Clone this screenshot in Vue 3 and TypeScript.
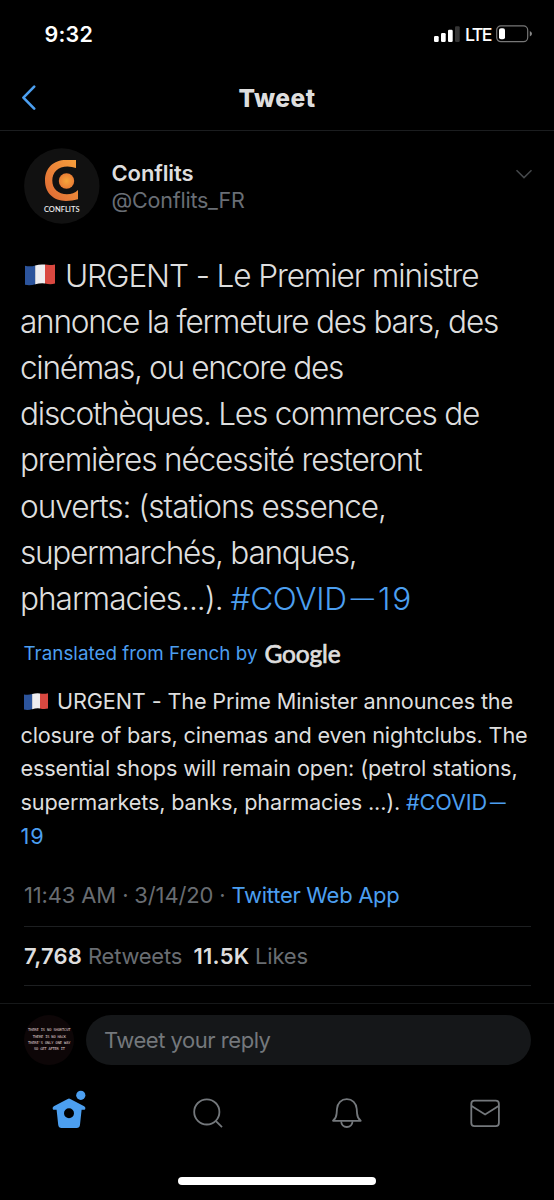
<script setup lang="ts">
import { h, type FunctionalComponent, type ObjectDirective } from 'vue'

interface Run {
  text: string
  width: number
  link?: boolean
  dash?: boolean
}
interface Line {
  flag?: boolean
  runs: Run[]
}

// Tracks a run of text evenly so that it fills the given measure.
const vFit: ObjectDirective<HTMLElement, number> = {
  mounted(el, { value }) {
    const count = (el.textContent ?? '').length
    const natural = el.getBoundingClientRect().width
    if (count > 0) el.style.letterSpacing = `${(value - natural) / count}px`
  },
}

const original: Line[] = [
  { flag: true, runs: [{ text: 'URGENT - Le Premier ministre', width: 413.5 }] },
  { runs: [{ text: 'annonce la fermeture des bars, des', width: 478 }] },
  { runs: [{ text: 'cinémas, ou encore des', width: 323 }] },
  { runs: [{ text: 'discothèques. Les commerces de', width: 459 }] },
  { runs: [{ text: 'premières nécessité resteront', width: 401.5 }] },
  { runs: [{ text: 'ouverts: (stations essence,', width: 366 }] },
  { runs: [{ text: 'supermarchés, banques,', width: 336.5 }] },
  {
    runs: [
      { text: 'pharmacies...). ', width: 210.5 },
      { text: '#COVID', width: 116, link: true },
      { text: '－', width: 31.5, link: true, dash: true },
      { text: '19', width: 35, link: true },
    ],
  },
]

const translated: Line[] = [
  { flag: true, runs: [{ text: 'URGENT - The Prime Minister announces the', width: 456 }] },
  { runs: [{ text: 'closure of bars, cinemas and even nightclubs. The', width: 507 }] },
  { runs: [{ text: 'essential shops will remain open: (petrol stations,', width: 497 }] },
  {
    runs: [
      { text: 'supermarkets, banks, pharmacies ...). ', width: 385.5 },
      { text: '#COVID', width: 81, link: true },
      { text: '－', width: 22, link: true, dash: true },
    ],
  },
  { runs: [{ text: '19', width: 24, link: true }] },
]

const Flag: FunctionalComponent = () =>
  h('svg', { viewBox: '0 0 30 22', preserveAspectRatio: 'none' }, [
    h('path', { d: 'M0 1.8Q5 3 10.5 1.4V20.2Q5 22 0 20.8Z', fill: '#2c549c' }),
    h('path', { d: 'M10.2 1.4Q15 0 20 .6V19.4Q15 18.9 10.2 20.3Z', fill: '#eeedf0' }),
    h('path', { d: 'M20 .6Q25 1.6 30 .4V19.6Q25 20.8 20 19.4Z', fill: '#d94840' }),
  ])
</script>

<template>
  <main class="screen">
    <div class="status">
      <span v-fit="48.5" class="time">9:32</span>
      <div class="signals">
        <svg class="bars" width="26" height="16" viewBox="0 0 26 16">
          <rect x="0" y="10" width="4.7" height="6" rx="1.2" fill="#fff" />
          <rect x="7" y="7" width="4.7" height="9" rx="1.2" fill="#fff" />
          <rect x="14" y="3.7" width="4.7" height="12.3" rx="1.2" fill="#fff" />
          <rect x="21" y="0.3" width="4.7" height="15.7" rx="1.2" fill="#353535" />
        </svg>
        <span class="lte"><span v-fit="26">LTE</span></span>
        <svg class="battery" width="37" height="18" viewBox="0 0 37 18">
          <rect x="0.7" y="0.9" width="31" height="15.8" rx="4.2" fill="none" stroke="#777" stroke-width="1.2" />
          <rect x="3" y="3.3" width="6" height="11" rx="2" fill="#fff" />
          <path d="M33.8 6Q36 7 36 8.8T33.8 11.6Z" fill="#888" />
        </svg>
      </div>
    </div>

    <header class="bar">
      <svg class="back" width="16" height="26" viewBox="0 0 16 26">
        <path d="M13.2 1.6 2.4 12.6 13.2 23.6" fill="none" stroke="#4c9ff0" stroke-width="2.6" stroke-linecap="round" stroke-linejoin="round" />
      </svg>
      <h1><span v-fit="77">Tweet</span></h1>
    </header>

    <section class="author">
      <svg class="avatar" width="76" height="76" viewBox="0 0 76 76">
        <defs>
          <linearGradient id="ring" x1="0" y1="1" x2="1" y2="0">
            <stop offset="0" stop-color="#dd6734" />
            <stop offset="1" stop-color="#f8a03c" />
          </linearGradient>
          <radialGradient id="core">
            <stop offset="0" stop-color="#f7a63b" />
            <stop offset="1" stop-color="#ea7d34" />
          </radialGradient>
        </defs>
        <circle cx="37.8" cy="38" r="37.7" fill="#111" />
        <path d="M52 12V20Q48 18.4 43.5 18.4C34 18.4 28.3 24.2 28.3 32.6S34.2 46.3 43 46.3Q49.5 46.3 54 42V51.3Q48.5 53 42 53C29.5 53 21 45 21 32.6C21 20 29.5 12 42 12Z" fill="url(#ring)" />
        <circle cx="42.5" cy="33" r="7.7" fill="url(#core)" />
        <text x="20" y="63.7" textLength="35.5" lengthAdjust="spacingAndGlyphs" class="brand">CONFLITS</text>
      </svg>
      <div class="names">
        <strong><span v-fit="82">Conflits</span></strong>
        <span><span v-fit="133">@Conflits_FR</span></span>
      </div>
      <svg class="caret" width="18" height="10" viewBox="0 0 18 10">
        <path d="M1.5 1.2 9 8.6 16.5 1.2" fill="none" stroke="#45484b" stroke-width="1.5" />
      </svg>
    </section>

    <p class="copy large">
      <span v-for="(line, i) in original" :key="i" class="line">
        <Flag v-if="line.flag" class="flag" />
        <span v-for="(run, j) in line.runs" :key="j" v-fit="run.width" :class="{ link: run.link, dash: run.dash }">{{ run.text }}</span>
      </span>
    </p>

    <div class="credit">
      <span v-fit="234">Translated from French by</span>
      <b v-fit="76">Google</b>
    </div>

    <p class="copy small">
      <span v-for="(line, i) in translated" :key="i" class="line">
        <Flag v-if="line.flag" class="flag" />
        <span v-for="(run, j) in line.runs" :key="j" v-fit="run.width" :class="{ link: run.link, dash: run.dash }">{{ run.text }}</span>
      </span>
    </p>

    <div class="meta">
      <span v-fit="207.5">11:43 AM · 3/14/20 · </span>
      <span v-fit="168" class="link">Twitter Web App</span>
    </div>

    <div class="stats">
      <b v-fit="58">7,768</b>
      <span v-fit="94" class="retweets">Retweets</span>
      <b v-fit="56" class="likes-count">11.5K</b>
      <span v-fit="53" class="likes">Likes</span>
    </div>

    <section class="reply">
      <svg width="50" height="50" viewBox="0 0 50 50">
        <circle cx="25" cy="25" r="25" fill="#0d0607" />
        <g class="motto">
          <text x="4" y="16.4" textLength="42.5">THERE IS NO SHORTCUT</text>
          <text x="8.7" y="22.7" textLength="33.3">THERE IS NO HACK</text>
          <text x="4" y="29" textLength="42.5">THERE'S ONLY ONE WAY</text>
          <text x="10" y="35.3" textLength="31">SO GET AFTER IT</text>
        </g>
      </svg>
      <div class="field"><span v-fit="166.5">Tweet your reply</span></div>
    </section>

    <nav class="tabs">
      <svg width="44" height="44" viewBox="0 0 44 44">
        <path fill="#4c9ff0" fill-rule="evenodd" d="M20.7 12.9Q22 12.2 23.3 12.9L37.2 20.3Q38.8 21.3 38.3 22.9Q37.7 24.1 35.7 23.8H34.6L33 38.7Q32.6 42 29.6 42H14.6Q11.6 42 11.2 38.7L9.6 23.8H8.3Q6.2 24.1 5.7 22.9Q5.2 21.3 6.8 20.3ZM22 22.2A5 5 0 1 0 22 32.2A5 5 0 1 0 22 22.2Z" />
        <circle cx="33.8" cy="9.3" r="4.6" fill="#4c9ff0" />
      </svg>
      <svg width="44" height="44" viewBox="0 0 44 44" class="outline">
        <circle cx="20.8" cy="25.9" r="12.6" />
        <path d="M29.7 34.8 36 41.1" />
      </svg>
      <svg width="44" height="44" viewBox="0 0 44 44" class="outline">
        <path d="M9 34.8H36.7Q33.4 32.2 33.1 27.6L32.7 22.8C32.3 17 28.3 13.1 22.8 13.1S13.4 17 13 22.8L12.6 27.6Q12.3 32.2 9 34.8Z" stroke-linejoin="round" />
        <path d="M17.2 35.3C17.2 38.5 19.5 41 22.8 41S28.5 38.5 28.5 35.3" />
      </svg>
      <svg width="44" height="44" viewBox="0 0 44 44" class="outline">
        <rect x="8.3" y="14.7" width="27.6" height="25.4" rx="3.2" />
        <path d="M8.6 20 22.1 28.4 35.6 20" />
      </svg>
    </nav>
    <div class="grip"></div>
  </main>
</template>

<style>
html,
body {
  background: #000;
}
</style>

<style scoped>
.screen {
  width: 554px;
  height: 1200px;
  overflow: hidden;
  background: #000;
  color: #dedede;
  font-family: Inter, "Liberation Sans", sans-serif;
  font-size: 22px;
  display: flex;
  flex-direction: column;
}
.screen > * {
  flex: none;
  box-sizing: border-box;
}
span,
b,
strong {
  white-space: pre;
}
svg {
  display: block;
  flex: none;
}
.link {
  color: #4c9ff0;
}

.status {
  height: 68.6px;
  padding: 0 21px 0 44.5px;
  display: flex;
  align-items: center;
  justify-content: space-between;
  color: #fff;
}
.time {
  font-size: 21.5px;
  font-weight: 600;
}
.signals {
  display: flex;
  align-items: center;
  font-size: 17.8px;
  font-weight: 500;
}
.lte {
  margin: 1px 5px 0 5px;
}

.bar {
  height: 62px;
  padding: 0 21px 3px;
  display: grid;
  grid-template-columns: 16px 1fr 16px;
  align-items: center;
  border-bottom: 1px solid #1b1d1f;
}
h1 {
  margin: 0;
  text-align: center;
  font-size: 24.5px;
  font-weight: 800;
}

.author {
  height: 122px;
  padding: 17.4px 21px 0 24px;
  display: flex;
  align-items: flex-start;
}
.brand {
  font: 600 6.7px Lato, sans-serif;
  fill: #eee;
}
.names {
  flex: 1;
  padding: 12.3px 0 0 11.5px;
  display: flex;
  flex-direction: column;
  line-height: 27px;
}
.names strong {
  font-weight: 600;
}
.names > span {
  font-size: 21.5px;
  color: #696e75;
}
.caret {
  margin-top: 21px;
}

.copy {
  margin: 0;
}
.line {
  display: flex;
}
.large {
  height: 375.8px;
  padding-left: 20px;
  font-size: 31.6px;
  font-weight: 300;
  line-height: 46.2px;
}
.large .flag {
  width: 30px;
  height: 22px;
  margin: 11.9px 10px 0 5px;
}
.dash {
  margin-top: -0.06em;
  margin-bottom: 0.06em;
  font-family: "Noto Sans CJK JP", sans-serif;
}

.credit {
  height: 56.6px;
  padding: 0 0 5px 23.5px;
  display: flex;
  align-items: center;
  font-size: 18.8px;
  line-height: 30px;
  color: #4c9ff0;
}
.credit b {
  margin-left: 7px;
  font: 400 24.5px/30px Lato, sans-serif;
  -webkit-text-stroke: 0.7px #dedede;
  color: #dedede;
}

.small {
  height: 177px;
  padding-left: 20.5px;
  font-size: 21.7px;
  line-height: 33.7px;
}
.small .flag {
  width: 24px;
  height: 17.5px;
  margin: 8px 9px 0 3.5px;
}

.meta {
  height: 65px;
  margin: 0 23px 0 24px;
  padding-top: 2px;
  display: flex;
  align-items: center;
  border-bottom: 1px solid #1d1f21;
  color: #696d72;
}
.stats {
  height: 59px;
  margin: 0 23px 0 24px;
  display: flex;
  align-items: center;
  border-bottom: 1px solid #1d1f21;
  color: #696d72;
}
.stats b {
  font-weight: 600;
  color: #dedede;
}
.retweets {
  margin-left: 6px;
}
.likes-count {
  margin-left: 11.5px;
}
.likes {
  margin-left: 5.5px;
}

.reply {
  height: 63px;
  margin-top: 17px;
  padding: 11.5px 23.5px 0 24px;
  display: flex;
  gap: 12px;
  border-top: 1px solid #161819;
}
.motto {
  font: 400 3.7px "DejaVu Sans Mono", monospace;
  fill: #e4dcdc;
}
.field {
  flex: 1;
  height: 50px;
  padding-left: 18px;
  border-radius: 25px;
  background: #151719;
  color: #74787c;
  line-height: 50px;
}

.tabs {
  height: 111px;
  padding-top: 20px;
  display: grid;
  grid-template-columns: repeat(4, 1fr);
  justify-items: center;
}
.outline {
  fill: none;
  stroke: #74787c;
  stroke-width: 1.8;
}
.grip {
  width: 198px;
  height: 8px;
  margin-left: 178px;
  border-radius: 4px;
  background: #fff;
}
</style>
